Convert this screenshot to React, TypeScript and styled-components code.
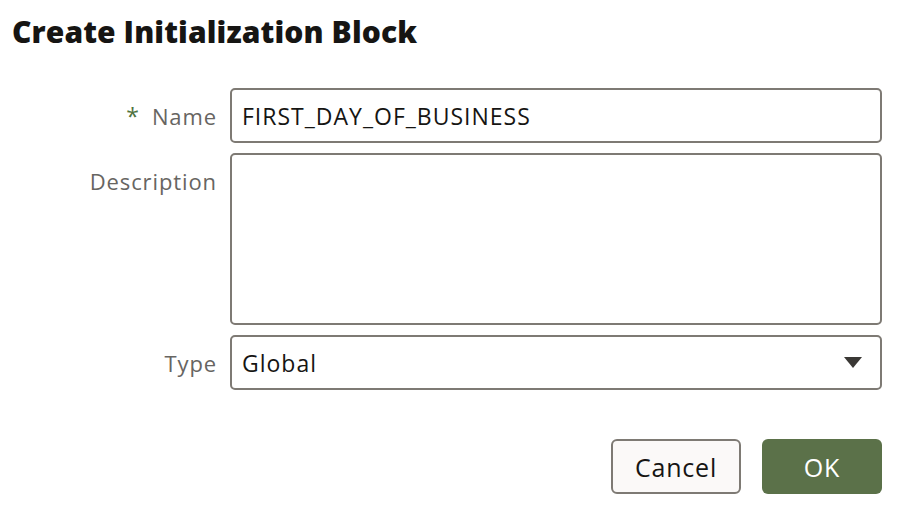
import React from "react";
import styled, { createGlobalStyle } from "styled-components";

const Global = createGlobalStyle`
  html, body { margin: 0; padding: 0; background: #ffffff; }
  body { font-family: "Open Sans", "Noto Sans", sans-serif; color: #161513; }
  * { box-sizing: border-box; }
`;

const Dialog = styled.div`
  width: 902px;
  height: 514px;
  padding: 14px 20px 0 12px;
  display: flex;
  flex-direction: column;
`;

const Title = styled.h1`
  margin: 0;
  font-size: 30px;
  line-height: 36px;
  font-weight: 800;
  color: #161513;
  letter-spacing: 0.1px;
`;

const Form = styled.div`
  margin-top: 38px;
  display: grid;
  grid-template-columns: 205px 1fr;
  column-gap: 13px;
  row-gap: 10px;
`;

const Label = styled.label`
  justify-self: end;
  height: 55px;
  display: flex;
  align-items: center;
  gap: 12px;
  font-size: 22px;
  letter-spacing: 0.9px;
  color: #676562;
`;

const Required = styled.span`
  color: #4f7340;
  font-size: 23px;
`;

const Field = styled.div<{ $tall?: boolean }>`
  height: ${(p) => (p.$tall ? "172px" : "55px")};
  border: 2px solid #7e7a74;
  border-radius: 5px;
  background: #ffffff;
  display: flex;
  align-items: ${(p) => (p.$tall ? "flex-start" : "center")};
  padding: 0 18px 0 10px;
  font-size: 23px;
  letter-spacing: 1px;
  color: #161513;
`;

const Value = styled.span`
  flex: 1;
`;

const Caret = styled.svg`
  width: 18px;
  height: 11px;
  fill: #3a3835;
`;

const Actions = styled.div`
  margin-top: 49px;
  display: flex;
  justify-content: flex-end;
  gap: 21px;
`;

const Button = styled.button<{ $primary?: boolean }>`
  height: 55px;
  padding: 0 ${(p) => (p.$primary ? "38px" : "20px")};
  min-width: ${(p) => (p.$primary ? "120px" : "130px")};
  border-radius: 6px;
  border: ${(p) => (p.$primary ? "none" : "2px solid #7e7a74")};
  background: ${(p) => (p.$primary ? "#5b7149" : "#fbf9f8")};
  color: ${(p) => (p.$primary ? "#ffffff" : "#161513")};
  font-family: "Open Sans", "Noto Sans", sans-serif;
  font-size: 25px;
  letter-spacing: 0.8px;
`;

export default function App() {
  return (
    <>
      <Global />
      <Dialog>
        <Title>Create Initialization Block</Title>
        <Form>
          <Label>
            <Required>*</Required>Name
          </Label>
          <Field>
            <Value>FIRST_DAY_OF_BUSINESS</Value>
          </Field>
          <Label>Description</Label>
          <Field $tall />
          <Label>Type</Label>
          <Field>
            <Value>Global</Value>
            <Caret viewBox="0 0 18 11">
              <path d="M0 0 H18 L9 11 Z" />
            </Caret>
          </Field>
        </Form>
        <Actions>
          <Button>Cancel</Button>
          <Button $primary>OK</Button>
        </Actions>
      </Dialog>
    </>
  );
}
